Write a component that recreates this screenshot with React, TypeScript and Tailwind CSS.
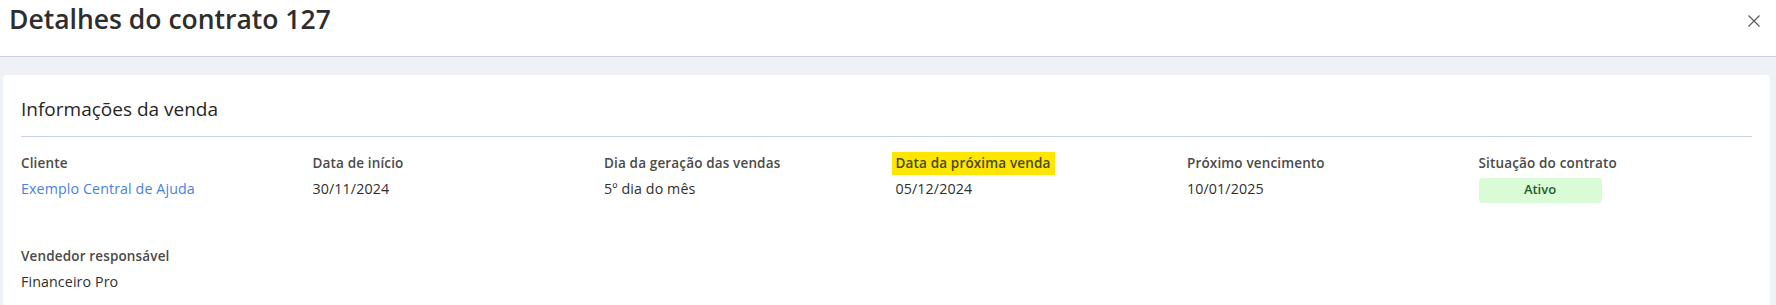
import React from "react";

const font = { fontFamily: '"Open Sans", "Noto Sans", sans-serif' };

function Label({ children, highlight }: { children: React.ReactNode; highlight?: boolean }) {
  if (highlight) {
    return (
      <div className="text-[13.5px] font-semibold leading-[22.5px] tracking-[0.15px] text-[#4a4a4a]">
        <span className="-ml-[4px] inline-block bg-[#ffe600] px-[4px] text-[#4a4a1a]">{children}</span>
      </div>
    );
  }
  return <div className="text-[13.5px] font-semibold leading-[22.5px] tracking-[0.15px] text-[#4a4a4a]">{children}</div>;
}

function Value({ children, link }: { children: React.ReactNode; link?: boolean }) {
  return (
    <div className={`mt-[4.5px] text-[14.25px] leading-[20px] tracking-[0.1px] ${link ? "text-[#4a7fe3]" : "text-[#2f2f2f]"}`}>
      {children}
    </div>
  );
}

export default function App() {
  return (
    <div className="h-[305px] w-full overflow-hidden bg-[#eef1f6]" style={font}>
      <div className="flex h-[57px] items-start justify-between border-b border-[#c6d0df] bg-white pl-[9px] pr-[16px]">
        <h1 className="pt-[3px] text-[26.5px] font-semibold leading-[32px] text-[#2e2e2e]">Detalhes do contrato 127</h1>
        <button className="mt-[15px] text-[#555]" aria-label="Fechar">
          <svg width="12" height="12" viewBox="0 0 12 12" fill="none" stroke="currentColor" strokeWidth="1.1">
            <path d="M0.5 0.5 L11.5 11.5 M11.5 0.5 L0.5 11.5" />
          </svg>
        </button>
      </div>
      <div className="ml-[3px] mr-[6px] mt-[18px] rounded-[4px] bg-white px-[18px] pb-[40px] pt-[20px]">
        <h2 className="text-[19px] font-normal leading-[28px] text-[#262626]">Informações da venda</h2>
        <div className="mt-[13px] h-px bg-[#c9d3e1]" />
        <div className="mt-[15px] grid grid-cols-6 gap-x-[18px] gap-y-[42px]">
          <div>
            <Label>Cliente</Label>
            <Value link>Exemplo Central de Ajuda</Value>
          </div>
          <div>
            <Label>Data de início</Label>
            <Value>30/11/2024</Value>
          </div>
          <div>
            <Label>Dia da geração das vendas</Label>
            <Value>5º dia do mês</Value>
          </div>
          <div>
            <Label highlight>Data da próxima venda</Label>
            <Value>05/12/2024</Value>
          </div>
          <div>
            <Label>Próximo vencimento</Label>
            <Value>10/01/2025</Value>
          </div>
          <div>
            <Label>Situação do contrato</Label>
            <div className="mt-[3px] flex h-[25px] w-[123px] items-center justify-center rounded-[4px] bg-[#d9fbd6] text-[13px] font-semibold text-[#1d5b2c]">
              Ativo
            </div>
          </div>
          <div>
            <Label>Vendedor responsável</Label>
            <Value>Financeiro Pro</Value>
          </div>
        </div>
      </div>
    </div>
  );
}
